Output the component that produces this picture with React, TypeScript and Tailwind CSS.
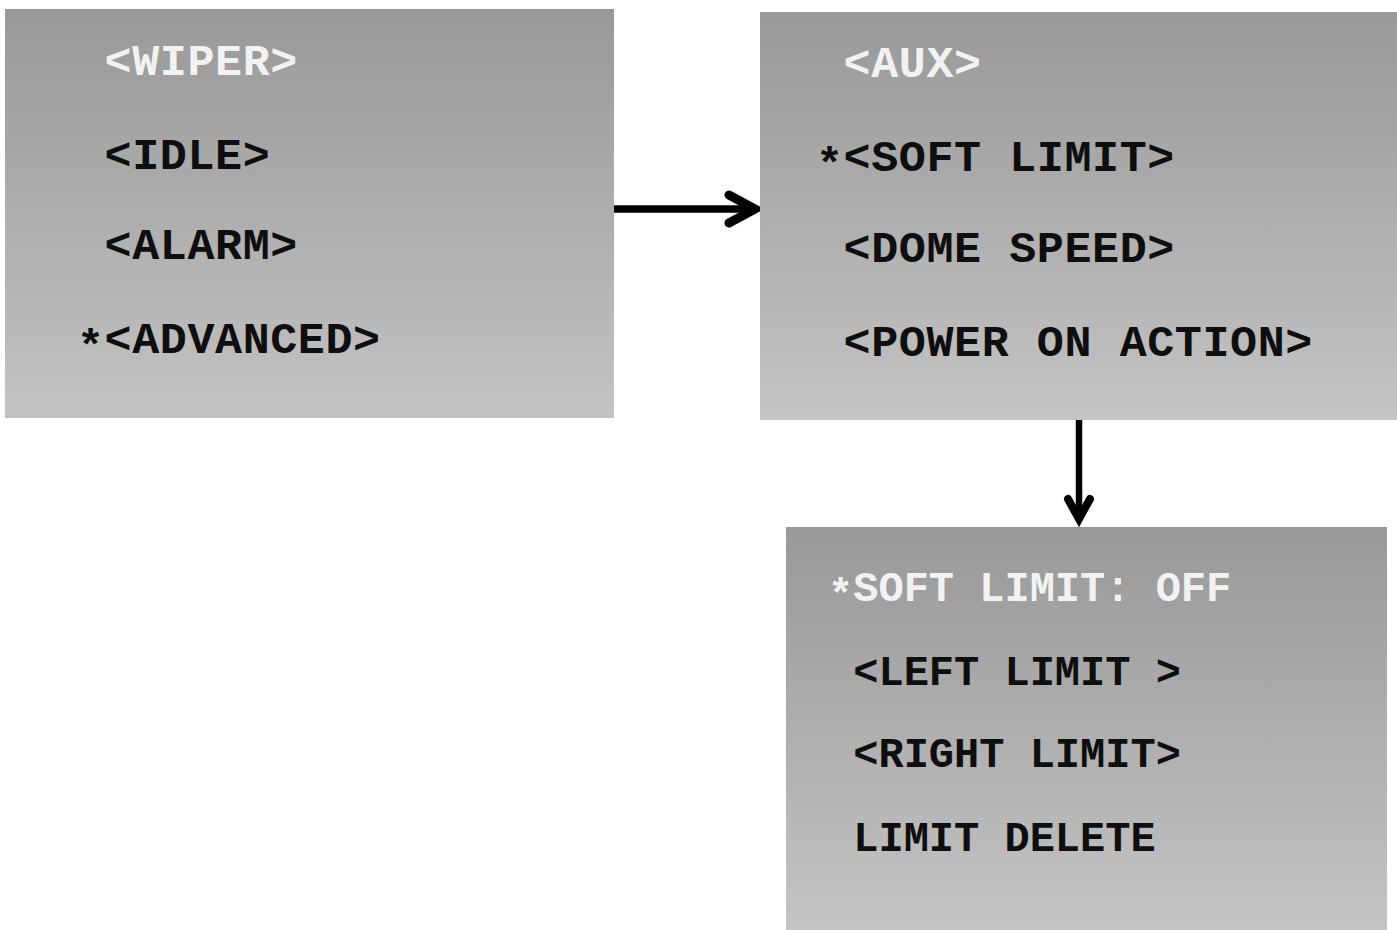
import React from "react";

type Line = { text: string; star?: boolean; white?: boolean; mt: number };

const p1: Line[] = [
  { text: "<WIPER>", white: true, mt: 32 },
  { text: "<IDLE>", mt: 49 },
  { text: "<ALARM>", mt: 45 },
  { text: "<ADVANCED>", star: true, mt: 49 },
];

const p2: Line[] = [
  { text: "<AUX>", white: true, mt: 31 },
  { text: "<SOFT LIMIT>", star: true, mt: 49 },
  { text: "<DOME SPEED>", mt: 46 },
  { text: "<POWER ON ACTION>", mt: 49 },
];

const p3: Line[] = [
  { text: "SOFT LIMIT: OFF", star: true, white: true, mt: 42 },
  { text: "<LEFT LIMIT >", mt: 42 },
  { text: "<RIGHT LIMIT>", mt: 40 },
  { text: "LIMIT DELETE", mt: 42 },
];

function Lines({ lines, big }: { lines: Line[]; big: boolean }) {
  return (
    <div className="flex flex-col">
      {lines.map((l, i) => (
        <div
          key={i}
          style={{ marginTop: l.mt }}
          className={
            (big
              ? "text-[45px] leading-[45px] h-[45px] tracking-[0.6px] "
              : "text-[42px] leading-[42px] h-[42px] tracking-[0px] ") +
            "whitespace-pre font-bold flex " +
            (l.white ? "text-[#f2f2f2]" : "text-[#0e0e0e]")
          }
        >
          <span className="inline-block translate-y-[7px]">{l.star ? "*" : "\u00a0"}</span>
          <span>{l.text}</span>
        </div>
      ))}
    </div>
  );
}

export default function App() {
  return (
    <div className="w-[1397px] h-[930px] bg-white overflow-hidden font-['Liberation_Mono',monospace]">
      <div className="flex items-start">
        <div className="pl-[5px] pt-[9px]">
          <div className="w-[609px] h-[409px] bg-linear-to-b from-[#999999] to-[#c3c3c3] pl-[72px]">
            <Lines lines={p1} big />
          </div>
        </div>
        <div className="w-[146px] pt-[189px]">
          <svg width="146" height="40" viewBox="0 0 146 40" overflow="visible">
            <line x1="0" y1="20" x2="140" y2="20" stroke="#000" strokeWidth="7.5" />
            <polyline
              points="115,6 141,20 115,34"
              fill="none"
              stroke="#000"
              strokeWidth="9"
              strokeLinecap="round"
              strokeLinejoin="miter"
            />
          </svg>
        </div>
        <div className="w-[637px] pt-[12px] flex flex-col">
          <div className="w-[637px] h-[408px] bg-linear-to-b from-[#999999] to-[#c4c4c4] pl-[56px]">
            <Lines lines={p2} big />
          </div>
          <div className="flex justify-center h-[107px]">
            <svg width="40" height="107" viewBox="0 0 40 107" overflow="visible">
              <line x1="20" y1="0" x2="20" y2="98" stroke="#000" strokeWidth="6.5" />
              <polyline
                points="9,79 20,99 31,79"
                fill="none"
                stroke="#000"
                strokeWidth="8"
                strokeLinecap="round"
                strokeLinejoin="miter"
              />
            </svg>
          </div>
          <div className="ml-[26px] w-[601px] h-[403px] bg-linear-to-b from-[#999999] to-[#c4c4c4] pl-[42px]">
            <Lines lines={p3} big={false} />
          </div>
        </div>
      </div>
    </div>
  );
}
